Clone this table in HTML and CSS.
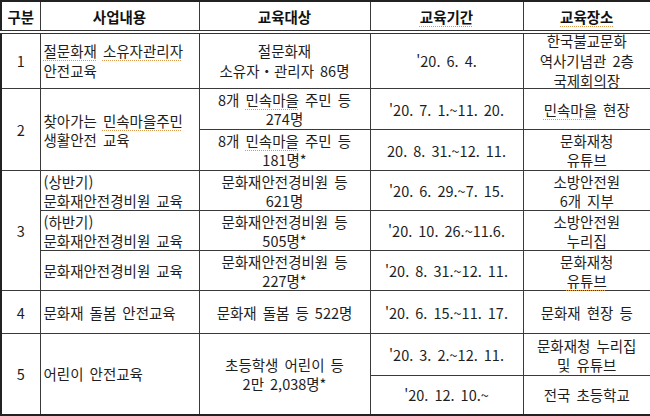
FILE: index.html
```html
<!DOCTYPE html>
<html lang="ko">
<head>
<meta charset="utf-8">
<link rel="stylesheet" href="styles.css">
</head>
<body>
<table class="tbl">
  <colgroup>
    <col class="c1"><col class="c2"><col class="c3"><col class="c4"><col class="c5">
  </colgroup>
  <thead>
    <tr class="h-head">
      <th>구분</th>
      <th>사업내용</th>
      <th>교육대상</th>
      <th><span class="sp">교육기간</span></th>
      <th><span class="sp">교육장소</span></th>
    </tr>
  </thead>
  <tbody>
    <tr class="h-r1">
      <td class="num">1</td>
      <td class="left"><span class="sp">절문화재</span> <span class="sp">소유자관리자</span><br>안전교육</td>
      <td>절문화재<br>소유자・관리자 86명</td>
      <td>'20. 6. 4.</td>
      <td><span class="tall">한국불교문화<br>역사기념관 2층<br>국제회의장</span></td>
    </tr>
    <tr class="h-r2">
      <td class="num" rowspan="2">2</td>
      <td class="left" rowspan="2">찾아가는 <span class="sp">민속마을주민</span><br>생활안전 교육</td>
      <td>8개 <span class="sp">민속마을</span> 주민 등<br>274명</td>
      <td>'20. 7. 1.~11. 20.</td>
      <td><span class="sp">민속마을</span> 현장</td>
    </tr>
    <tr class="h-r2">
      <td>8개 <span class="sp">민속마을</span> 주민 등<br>181명*</td>
      <td>20. 8. 31.~12. 11.</td>
      <td>문화재청<br>유튜브</td>
    </tr>
    <tr class="h-r3">
      <td class="num" rowspan="3">3</td>
      <td class="left">(상반기)<br>문화재안전경비원 교육</td>
      <td>문화재안전경비원 등<br>621명</td>
      <td>'20. 6. 29.~7. 15.</td>
      <td>소방안전원<br>6개 지부</td>
    </tr>
    <tr class="h-r3">
      <td class="left">(하반기)<br>문화재안전경비원 교육</td>
      <td>문화재안전경비원 등<br>505명*</td>
      <td>'20. 10. 26.~11.6.</td>
      <td>소방안전원<br>누리집</td>
    </tr>
    <tr class="h-r3">
      <td class="left">문화재안전경비원 교육</td>
      <td>문화재안전경비원 등<br>227명*</td>
      <td>'20. 8. 31.~12. 11.</td>
      <td>문화재청<br><span class="sp">유튜브</span></td>
    </tr>
    <tr class="h-r4">
      <td class="num">4</td>
      <td class="left">문화재 돌봄 안전교육</td>
      <td>문화재 돌봄 등 522명</td>
      <td>'20. 6. 15.~11. 17.</td>
      <td>문화재 현장 등</td>
    </tr>
    <tr class="h-r5a">
      <td class="num" rowspan="2">5</td>
      <td class="left" rowspan="2">어린이 안전교육</td>
      <td rowspan="2">초등학생 어린이 등<br>2만 2,038명*</td>
      <td>'20. 3. 2.~12. 11.</td>
      <td>문화재청 누리집<br>및 유튜브</td>
    </tr>
    <tr class="h-r5b">
      <td>'20. 12. 10.~</td>
      <td>전국 초등학교</td>
    </tr>
  </tbody>
</table>
</body>
</html>
```

FILE: styles.css
```css
html, body {
  margin: 0;
  padding: 0;
  background: #ffffff;
}

.tbl {
  width: 650px;
  table-layout: fixed;
  border-collapse: collapse;
  font-family: "Noto Sans CJK KR", "Noto Sans", sans-serif;
  font-size: 14.5px;
  line-height: 19px;
  word-spacing: 2px;
  color: #1e1e1e;
  border: 2px solid #222;
}

.c1 { width: 39px; }
.c2 { width: 159px; }
.c3 { width: 171px; }
.c4 { width: 153px; }
.c5 { width: 128px; }

.tbl th,
.tbl td {
  border: 1px solid #3a3a3a;
  padding: 0 2px;
  text-align: center;
  vertical-align: middle;
  white-space: nowrap;
  overflow: visible;
}

.tbl th {
  font-weight: bold;
  font-size: 14.5px;
  color: #111;
}

.tbl thead tr th {
  border-bottom: 4px double #333;
}

.tbl td.left {
  text-align: left;
  padding-left: 3px;
}

.tbl td.num {
  font-size: 14.5px;
}

.tall {
  display: block;
  line-height: 20px;
  margin: -3px 0;
}

.h-head { height: 31px; }
.h-r1 { height: 55px; }
.h-r1 td { line-height: 20px; }
.h-r2 { height: 41px; }
.h-r3 { height: 40px; }
.h-r4 { height: 43px; }
.h-r5a { height: 42px; }
.h-r5b { height: 39px; }

.sp {
  text-decoration: underline dotted #d99a4e;
  text-underline-offset: 3px;
  text-decoration-thickness: 1px;
}
```
